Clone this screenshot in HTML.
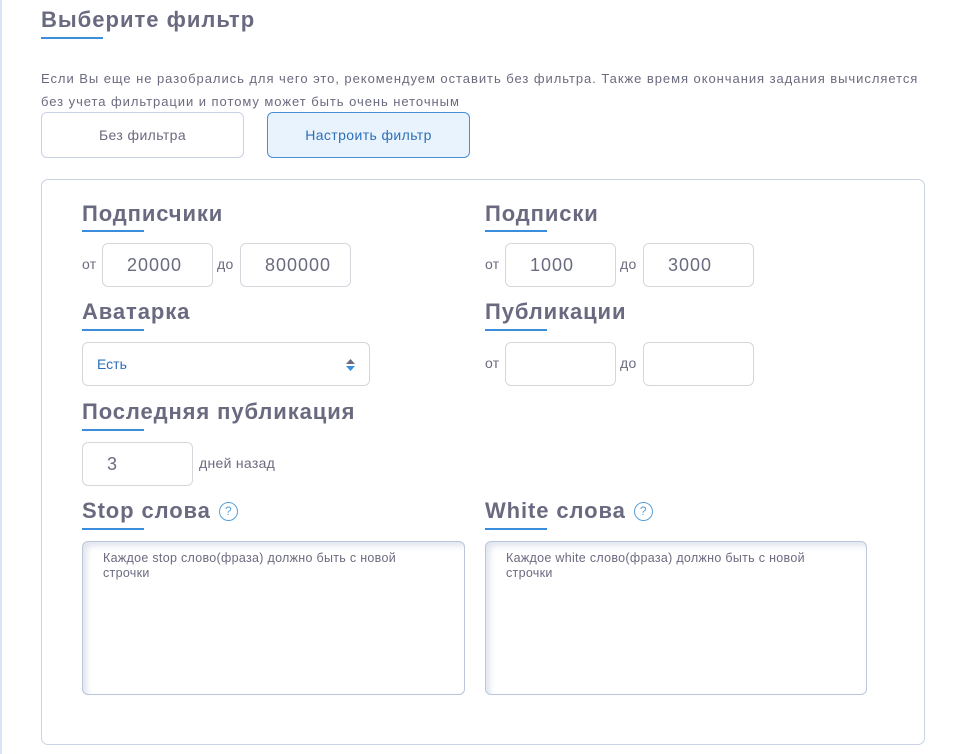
<!DOCTYPE html>
<html><head><meta charset="utf-8"><style>
*{box-sizing:border-box;margin:0;padding:0}
body{width:965px;height:754px;background:#fff;font-family:"Liberation Sans",sans-serif;color:#6b6b80;position:relative;overflow:hidden}
.a{position:absolute}
.lb{position:absolute;left:0;top:0;width:2px;height:754px;background:#dbe4f3}
.h{position:absolute;font-weight:bold;font-size:22px;color:#696a80;white-space:nowrap;letter-spacing:0.9px}
.u{position:absolute;height:2px;width:62px;background:#3b8ede}
.p{font-size:13px;line-height:23px;letter-spacing:0.95px;white-space:nowrap}
.btn{position:absolute;height:46px;border:1px solid #c9d2e2;border-radius:6px;font-size:14px;text-align:center;line-height:44px;color:#6b6b80;letter-spacing:0.4px}
.in{position:absolute;width:111px;height:44px;border:1px solid #d6d6dc;border-radius:6px;font-size:18px;color:#6b6b80;line-height:42px;padding-left:24px;letter-spacing:1px}
.t{position:absolute;font-size:14px;color:#6b6b80;letter-spacing:0.3px}
.q{display:inline-block;vertical-align:3px;margin-left:8px;width:19px;height:19px;border:1px solid #5aa0d8;border-radius:50%;color:#5aa0d8;font-size:12px;font-weight:normal;text-align:center;line-height:17px;letter-spacing:0}
.ta{position:absolute;height:154px;border:1px solid #b9c6dc;border-radius:6px;box-shadow:inset 4px 4px 6px rgba(170,180,210,.35);font-size:12.5px;line-height:15px;padding:9px 20px 10px 20px;color:#6b6b80;letter-spacing:0.3px;white-space:nowrap}
</style></head><body>
<div class="lb"></div>
<div class="h" style="left:41px;top:7px;letter-spacing:1px">Выберите фильтр</div>
<div class="u" style="left:41px;top:37px"></div>
<div class="a p" style="left:41px;top:67px">Если Вы еще не разобрались для чего это, рекомендуем оставить без фильтра. Также время окончания задания вычисляется<br>без учета фильтрации и потому может быть очень неточным</div>
<div class="btn" style="left:41px;top:112px;width:203px">Без фильтра</div>
<div class="btn" style="left:267px;top:112px;width:203px;background:#e8f3fd;border-color:#4a8fd6;color:#2e6fb8">Настроить фильтр</div>
<div class="a" style="left:41px;top:179px;width:884px;height:566px;border:1px solid #c9d3e3;border-radius:7px"></div>

<div class="h" style="left:82px;top:201px">Подписчики</div><div class="u" style="left:82px;top:230px"></div>
<div class="t" style="left:82px;top:256px">от</div>
<div class="in" style="left:102px;top:243px">20000</div>
<div class="t" style="left:217px;top:256px">до</div>
<div class="in" style="left:240px;top:243px">800000</div>

<div class="h" style="left:485px;top:201px">Подписки</div><div class="u" style="left:485px;top:230px"></div>
<div class="t" style="left:485px;top:256px">от</div>
<div class="in" style="left:505px;top:243px">1000</div>
<div class="t" style="left:620px;top:256px">до</div>
<div class="in" style="left:643px;top:243px">3000</div>

<div class="h" style="left:82px;top:299px">Аватарка</div><div class="u" style="left:82px;top:329px"></div>
<div class="a" style="left:82px;top:342px;width:288px;height:44px;border:1px solid #d6d6dc;border-radius:6px;font-size:14px;color:#2e6fb8;line-height:42px;padding-left:14px">Есть
<svg style="position:absolute;right:14px;top:16px" width="9" height="12" viewBox="0 0 9 12"><path d="M4.5 0L9 5H0z" fill="#6b6b80"/><path d="M4.5 12L9 7H0z" fill="#3b8ede"/></svg></div>

<div class="h" style="left:485px;top:299px">Публикации</div><div class="u" style="left:485px;top:329px"></div>
<div class="t" style="left:485px;top:355px">от</div>
<div class="in" style="left:505px;top:342px"></div>
<div class="t" style="left:620px;top:355px">до</div>
<div class="in" style="left:643px;top:342px"></div>

<div class="h" style="left:82px;top:399px">Последняя публикация</div><div class="u" style="left:82px;top:429px"></div>
<div class="in" style="left:82px;top:442px">3</div>
<div class="t" style="left:199px;top:455px">дней назад</div>

<div class="h" style="left:82px;top:498px">Stop слова<span class="q">?</span></div><div class="u" style="left:82px;top:528px"></div>
<div class="h" style="left:485px;top:498px">White слова<span class="q">?</span></div><div class="u" style="left:485px;top:528px"></div>

<div class="ta" style="left:82px;top:541px;width:383px">Каждое stop слово(фраза) должно быть с новой<br>строчки</div>
<div class="ta" style="left:485px;top:541px;width:382px">Каждое white слово(фраза) должно быть с новой<br>строчки</div>
</body></html>
